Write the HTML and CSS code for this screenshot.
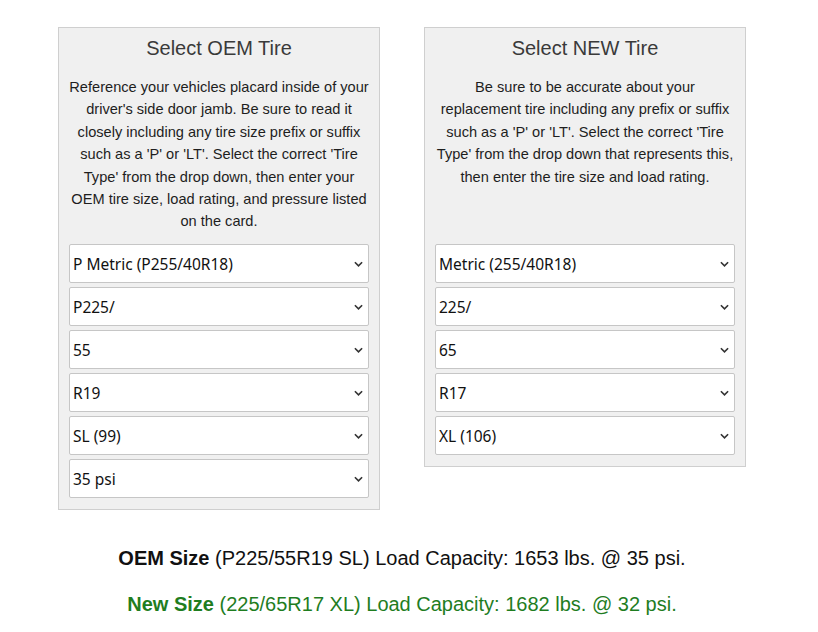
FILE: index.html
```html
<!DOCTYPE html>
<html>
<head>
<meta charset="utf-8">
<link rel="stylesheet" href="styles.css">
</head>
<body>
<div class="wrap">
  <div class="panels">
    <div class="panel">
      <h3 class="title">Select OEM Tire</h3>
      <p class="desc">Reference your vehicles placard inside of your driver's side door jamb. Be sure to read it closely including any tire size prefix or suffix such as a 'P' or 'LT'. Select the correct 'Tire Type' from the drop down, then enter your OEM tire size, load rating, and pressure listed on the card.</p>
      <div class="fields">
        <div class="sel"><select><option>P Metric (P255/40R18)</option></select><svg class="chev" viewBox="0 0 10 6"><path d="M1 1 L5 5 L9 1" fill="none" stroke="#333" stroke-width="1.8"/></svg></div>
        <div class="sel"><select><option>P225/</option></select><svg class="chev" viewBox="0 0 10 6"><path d="M1 1 L5 5 L9 1" fill="none" stroke="#333" stroke-width="1.8"/></svg></div>
        <div class="sel"><select><option>55</option></select><svg class="chev" viewBox="0 0 10 6"><path d="M1 1 L5 5 L9 1" fill="none" stroke="#333" stroke-width="1.8"/></svg></div>
        <div class="sel"><select><option>R19</option></select><svg class="chev" viewBox="0 0 10 6"><path d="M1 1 L5 5 L9 1" fill="none" stroke="#333" stroke-width="1.8"/></svg></div>
        <div class="sel"><select><option>SL (99)</option></select><svg class="chev" viewBox="0 0 10 6"><path d="M1 1 L5 5 L9 1" fill="none" stroke="#333" stroke-width="1.8"/></svg></div>
        <div class="sel"><select><option>35 psi</option></select><svg class="chev" viewBox="0 0 10 6"><path d="M1 1 L5 5 L9 1" fill="none" stroke="#333" stroke-width="1.8"/></svg></div>
      </div>
    </div>
    <div class="panel">
      <h3 class="title">Select NEW Tire</h3>
      <p class="desc">Be sure to be accurate about your replacement tire including any prefix or suffix such as a 'P' or 'LT'. Select the correct 'Tire Type' from the drop down that represents this, then enter the tire size and load rating.</p>
      <div class="fields">
        <div class="sel"><select><option>Metric (255/40R18)</option></select><svg class="chev" viewBox="0 0 10 6"><path d="M1 1 L5 5 L9 1" fill="none" stroke="#333" stroke-width="1.8"/></svg></div>
        <div class="sel"><select><option>225/</option></select><svg class="chev" viewBox="0 0 10 6"><path d="M1 1 L5 5 L9 1" fill="none" stroke="#333" stroke-width="1.8"/></svg></div>
        <div class="sel"><select><option>65</option></select><svg class="chev" viewBox="0 0 10 6"><path d="M1 1 L5 5 L9 1" fill="none" stroke="#333" stroke-width="1.8"/></svg></div>
        <div class="sel"><select><option>R17</option></select><svg class="chev" viewBox="0 0 10 6"><path d="M1 1 L5 5 L9 1" fill="none" stroke="#333" stroke-width="1.8"/></svg></div>
        <div class="sel"><select><option>XL (106)</option></select><svg class="chev" viewBox="0 0 10 6"><path d="M1 1 L5 5 L9 1" fill="none" stroke="#333" stroke-width="1.8"/></svg></div>
      </div>
    </div>
  </div>
  <div class="results">
    <p class="res oem"><b>OEM Size</b> (P225/55R19 SL) Load Capacity: 1653 lbs. @ 35 psi.</p>
    <p class="res new"><b>New Size</b> (225/65R17 XL) Load Capacity: 1682 lbs. @ 32 psi.</p>
  </div>
</div>
</body>
</html>
```
FILE: styles.css
```css
html, body {
  margin: 0;
  padding: 0;
  background: #fff;
}
body {
  font-family: "Liberation Sans", Arial, sans-serif;
}
.wrap {
  width: 688px;
  margin-left: 58px;
  padding-top: 27px;
}
.panels {
  display: flex;
  gap: 44px;
  align-items: flex-start;
}
.panel {
  width: 322px;
  box-sizing: border-box;
  background: #f0f0f0;
  border: 1px solid #cfcfcf;
  padding: 8px 10px 11px 10px;
}
.title {
  margin: 0;
  font-size: 20px;
  line-height: 24px;
  font-weight: normal;
  color: #3a3a3a;
  text-align: center;
}
.desc {
  margin: 16px 0 11px 0;
  font-size: 14.6px;
  line-height: 22.4px;
  color: #1e1e1e;
  text-align: center;
  min-height: 157px;
}
.fields {
  display: flex;
  flex-direction: column;
  gap: 4px;
}
.sel {
  position: relative;
}
.sel select {
  display: block;
  width: 100%;
  height: 39px;
  box-sizing: border-box;
  appearance: none;
  -webkit-appearance: none;
  background: #fff;
  border: 1px solid #c6c6c6;
  border-radius: 2px;
  padding: 0 24px 0 3px;
  font-family: "Noto Sans", "DejaVu Sans", sans-serif;
  font-size: 15.5px;
  color: #111;
}
.chev {
  position: absolute;
  right: 6px;
  top: 17px;
  width: 9px;
  height: 6px;
  pointer-events: none;
}
.results {
  padding-top: 36px;
  text-align: center;
}
.res {
  margin: 0;
  font-size: 20px;
  line-height: 24px;
}
.res.oem {
  color: #111;
}
.res.new {
  margin-top: 22px;
  color: #1f7d1f;
}
```
